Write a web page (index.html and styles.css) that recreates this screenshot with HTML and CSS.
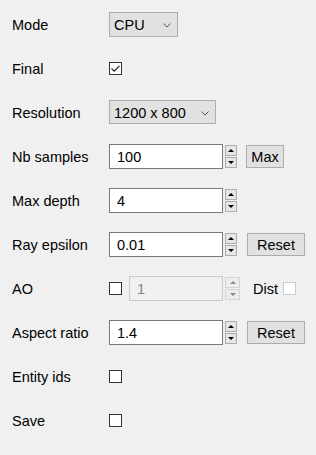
FILE: index.html
```html
<!DOCTYPE html>
<html>
<head>
<meta charset="utf-8">
<link rel="stylesheet" href="styles.css">
</head>
<body>
<div class="form">
  <div class="row">
    <span class="label">Mode</span>
    <div class="combo combo-mode"><span>CPU</span><svg class="chev" width="8" height="5" viewBox="0 0 8 5"><path d="M0.5 0.5 L4 4 L7.5 0.5" fill="none" stroke="#555" stroke-width="1"/></svg></div>
  </div>
  <div class="row">
    <span class="label">Final</span>
    <span class="check"><svg width="11" height="11" viewBox="0 0 11 11"><path d="M1.5 5.5 L4.2 8.2 L9.5 2.8" fill="none" stroke="#222" stroke-width="1.2"/></svg></span>
  </div>
  <div class="row">
    <span class="label">Resolution</span>
    <div class="combo combo-res"><span>1200 x 800</span><svg class="chev" width="8" height="5" viewBox="0 0 8 5"><path d="M0.5 0.5 L4 4 L7.5 0.5" fill="none" stroke="#555" stroke-width="1"/></svg></div>
  </div>
  <div class="row">
    <span class="label">Nb samples</span>
    <div class="ctl">
      <div class="input">100</div>
      <div class="spin"><span class="sb"><i class="up"></i></span><span class="sb"><i class="down"></i></span></div>
      <button class="btn btn-max">Max</button>
    </div>
  </div>
  <div class="row">
    <span class="label">Max depth</span>
    <div class="ctl">
      <div class="input">4</div>
      <div class="spin"><span class="sb"><i class="up"></i></span><span class="sb"><i class="down"></i></span></div>
    </div>
  </div>
  <div class="row">
    <span class="label">Ray epsilon</span>
    <div class="ctl">
      <div class="input">0.01</div>
      <div class="spin"><span class="sb"><i class="up"></i></span><span class="sb"><i class="down"></i></span></div>
      <button class="btn btn-reset">Reset</button>
    </div>
  </div>
  <div class="row">
    <span class="label">AO</span>
    <div class="ctl">
      <span class="check"></span>
      <div class="input input-dis">1</div>
      <div class="spin spin-dis"><span class="sb"><i class="up"></i></span><span class="sb"><i class="down"></i></span></div>
      <span class="dist">Dist</span>
      <span class="check check-dis"></span>
    </div>
  </div>
  <div class="row">
    <span class="label">Aspect ratio</span>
    <div class="ctl">
      <div class="input">1.4</div>
      <div class="spin"><span class="sb"><i class="up"></i></span><span class="sb"><i class="down"></i></span></div>
      <button class="btn btn-reset">Reset</button>
    </div>
  </div>
  <div class="row">
    <span class="label">Entity ids</span>
    <span class="check"></span>
  </div>
  <div class="row">
    <span class="label">Save</span>
    <span class="check"></span>
  </div>
</div>
</body>
</html>
```
FILE: styles.css
```css
html, body {
  margin: 0;
  padding: 0;
  background: #f0f0f0;
}
body {
  width: 316px;
  height: 455px;
  font-family: "Liberation Sans", Arial, sans-serif;
  font-size: 14.5px;
  color: #000;
}
.form {
  padding-top: 2px;
  display: flex;
  flex-direction: column;
}
.row {
  height: 44px;
  display: flex;
  align-items: center;
}
.label {
  width: 97px;
  padding-left: 12px;
  padding-top: 2px;
}
.ctl {
  display: flex;
  align-items: center;
}
.combo {
  box-sizing: border-box;
  height: 25px;
  background: #e1e1e1;
  border: 1px solid #adadad;
  display: flex;
  align-items: center;
  justify-content: space-between;
  padding: 1px 6px 0 4px;
}
.combo-mode { width: 69px; }
.combo-res { width: 107px; height: 24px; }
.chev { margin-top: 1px; }
.check {
  box-sizing: border-box;
  width: 13px;
  height: 13px;
  border: 1px solid #333;
  background: #fff;
  display: flex;
  align-items: center;
  justify-content: center;
}
.check svg { display: block; }
.input {
  box-sizing: border-box;
  width: 114px;
  height: 25px;
  border: 1px solid #7a7a7a;
  background: #fff;
  padding-left: 7px;
  padding-top: 1px;
  display: flex;
  align-items: center;
}
.input-dis {
  width: 94px;
  margin-left: 7px;
  border-color: #cccccc;
  background: #f0f0f0;
  color: #838383;
}
.spin {
  display: flex;
  flex-direction: column;
  gap: 1px;
  margin-left: 2px;
}
.sb {
  box-sizing: border-box;
  width: 12px;
  height: 11px;
  border: 1px solid #adadad;
  background: #e6e6e6;
  display: flex;
  align-items: center;
  justify-content: center;
}
.sb i {
  width: 0;
  height: 0;
  border-left: 3px solid transparent;
  border-right: 3px solid transparent;
}
.sb i.up { border-bottom: 3px solid #000; }
.sb i.down { border-top: 3px solid #000; }
.spin-dis { margin-left: 2px; }
.spin-dis .sb { border-color: #d4d4d4; background: #ececec; width: 15px; }
.spin-dis .sb i.up { border-bottom-color: #8a8a8a; }
.spin-dis .sb i.down { border-top-color: #8a8a8a; }
.btn {
  box-sizing: border-box;
  height: 23px;
  border: 1px solid #adadad;
  background: #e1e1e1;
  font-family: inherit;
  font-size: 14.5px;
  color: #000;
  padding: 1px 0 0;
  margin-left: 9px;
}
.btn-max { width: 38px; }
.btn-reset { width: 58px; margin-left: 10px; }
.dist { margin-left: 13px; padding-top: 1px; }
.check-dis {
  margin-left: 5px;
  border-color: #cccccc;
  background: #fff;
}
```
